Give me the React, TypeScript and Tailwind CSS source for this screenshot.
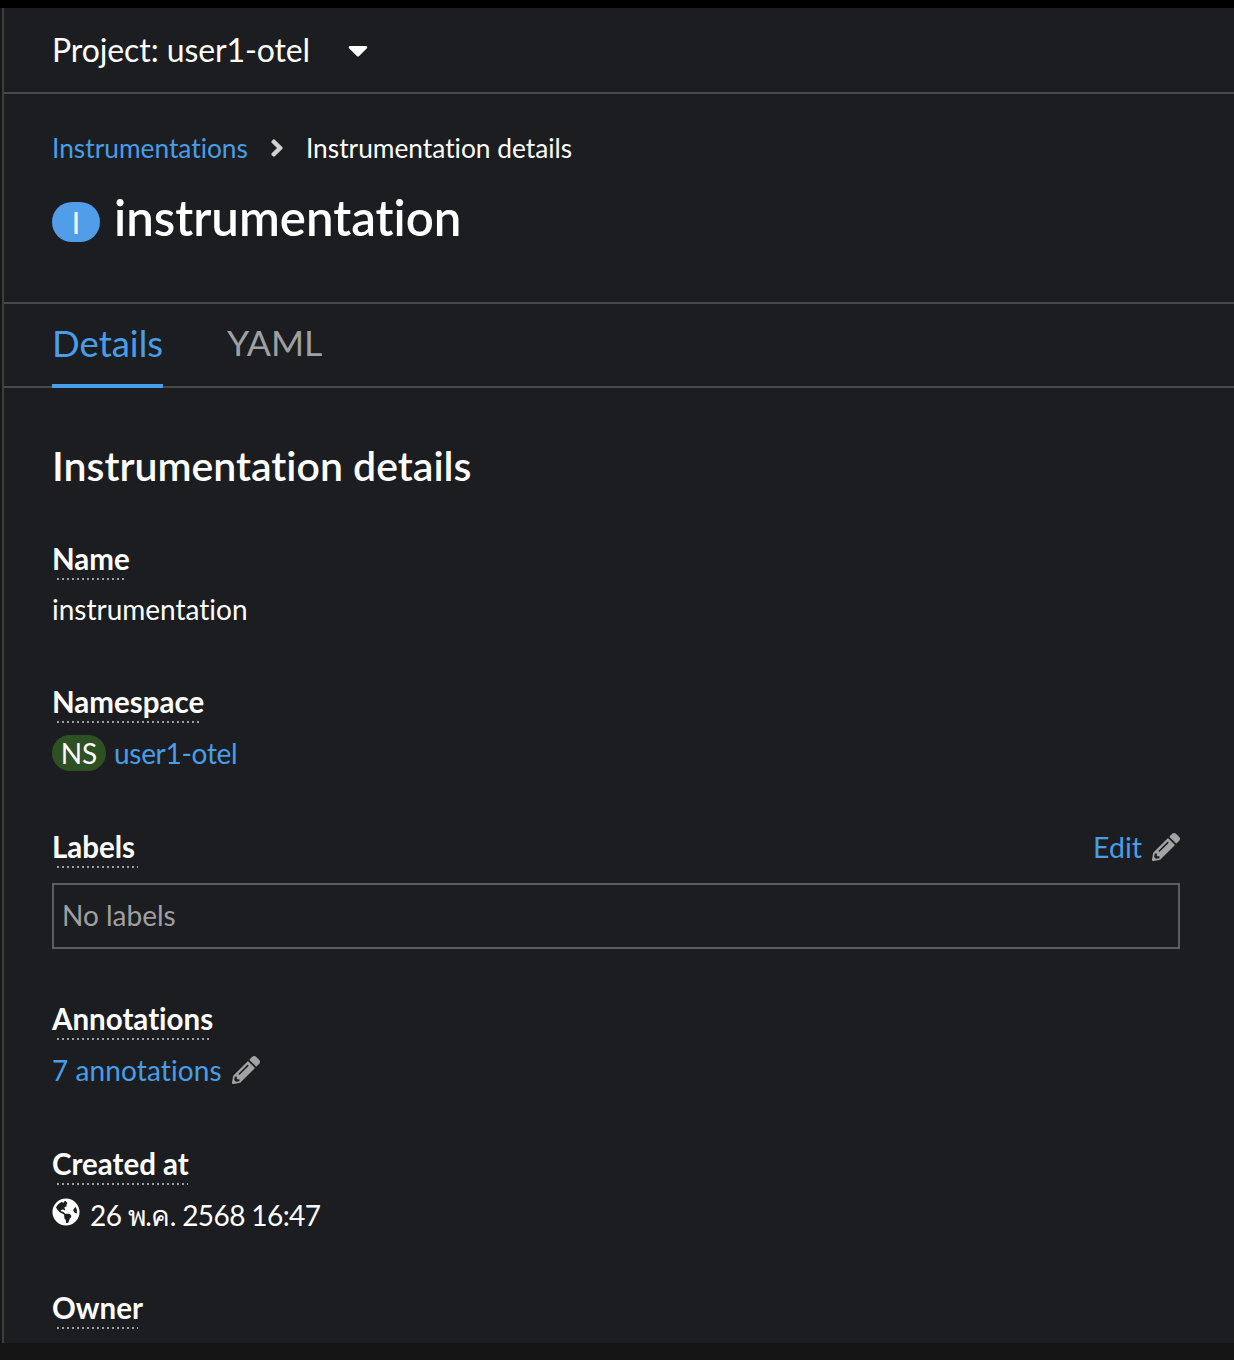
import React from "react";
import { FaCaretDown, FaAngleRight, FaPencilAlt, FaGlobeAmericas } from "react-icons/fa";

function Label({ text, dots }: { text: string; dots: number }) {
  return (
    <div className="w-fit">
      <div className="h-[38px] text-[29.5px] leading-[38px] font-bold text-white">{text}</div>
      <div
        className="ml-[5px] h-[2px] bg-[linear-gradient(to_right,#a0a0a0_36%,transparent_36%)] bg-[length:5px_2px]"
        style={{ width: dots }}
      />
    </div>
  );
}

function Pencil() {
  return <FaPencilAlt className="text-[#a3a3a3] w-[28px] h-[28px]" />;
}

export default function App() {
  return (
    <div className="h-[1360px] w-[1234px] flex flex-col overflow-hidden bg-[#151515] font-['Lato',sans-serif] [font-variant-ligatures:none]">
      <div className="h-[8px] shrink-0 bg-black" />
      <main className="h-[1335px] shrink-0 bg-[#1b1d21] border-l-2 border-[#3c3f42] ml-[2px] overflow-hidden">
        <div className="h-[86px] border-b-2 border-[#48494c] pl-[48px] flex items-center">
          <span className="text-[32px] leading-[40px] text-white tracking-[-0.1px]">Project: user1-otel</span>
          <FaCaretDown className="text-white w-[20px] h-[32px] ml-[38px]" />
        </div>
        <div className="h-[210px] border-b-2 border-[#48494c] pl-[48px] pt-[38px]">
          <div className="flex items-center h-[32px] text-[26.3px] leading-[32px]">
            <span className="text-[#489ee8]">Instrumentations</span>
            <FaAngleRight className="text-[#d2d2d2] w-[20px] h-[28px] ml-[19px] mr-[19px]" />
            <span className="text-white">Instrumentation details</span>
          </div>
          <div className="flex items-center mt-[24px]">
            <span className="w-[48px] h-[40px] rounded-[20px] bg-[#519de9] text-white text-[30px] flex items-center justify-center mt-[10px]">I</span>
            <h1 className="ml-[14px] text-[49.2px] leading-[58px] font-semibold text-white">instrumentation</h1>
          </div>
        </div>
        <div className="h-[84px] border-b-2 border-[#48494c] pl-[48px] flex">
          <div className="h-[84px] w-[111px] border-b-4 border-[#489ee8] text-[36.5px] leading-[78px] text-[#489ee8]">Details</div>
          <div className="ml-[64px] text-[35.7px] leading-[78px] text-[#a0a0a0]">YAML</div>
        </div>
        <div className="pl-[48px] pr-[54px] pt-[50px]">
          <h2 className="text-[41px] leading-[56px] font-semibold text-white">Instrumentation details</h2>
          <div className="mt-[46px]">
            <Label text="Name" dots={70} />
            <div className="mt-[9px] h-[41px] text-[28px] leading-[40px] text-white">instrumentation</div>
          </div>
          <div className="mt-[53px]">
            <Label text="Namespace" dots={145} />
            <div className="mt-[10px] h-[40px] flex items-center text-[28px]">
              <span className="w-[54px] h-[36px] rounded-[18px] bg-[#2e5123] text-white flex items-center justify-center">NS</span>
              <span className="ml-[8px] text-[#489ee8] tracking-[-0.3px]">user1-otel</span>
            </div>
          </div>
          <div className="mt-[55px]">
            <div className="flex justify-between">
              <Label text="Labels" dots={81} />
              <div className="flex items-start">
                <span className="text-[28.5px] leading-[38px] text-[#489ee8]">Edit</span>
                <span className="ml-[10px] mt-[5px]"><Pencil /></span>
              </div>
            </div>
            <div className="mt-[15px] h-[66px] border-2 border-[#5c5d60] pl-[8px] text-[28px] leading-[60px] text-[#a0a0a0]">No labels</div>
          </div>
          <div className="mt-[51px]">
            <Label text="Annotations" dots={153} />
            <div className="mt-[10px] h-[40px] flex items-center text-[28px]">
              <span className="text-[#489ee8] tracking-[0.1px]">7 annotations</span>
              <span className="ml-[10px]"><Pencil /></span>
            </div>
          </div>
          <div className="mt-[55px]">
            <Label text="Created at" dots={131} />
            <div className="mt-[10px] h-[40px] flex items-center text-[28px] text-white">
              <FaGlobeAmericas className="w-[28px] h-[28px] mb-[6px]" />
              <span className="ml-[10px] tracking-[-0.6px] font-['Lato','Noto_Sans','DejaVu_Sans',sans-serif]">26 พ.ค. 2568 16:47</span>
            </div>
          </div>
          <div className="mt-[54px]">
            <Label text="Owner" dots={81} />
          </div>
        </div>
      </main>
      <div className="flex-1 bg-[#151515]" />
    </div>
  );
}
